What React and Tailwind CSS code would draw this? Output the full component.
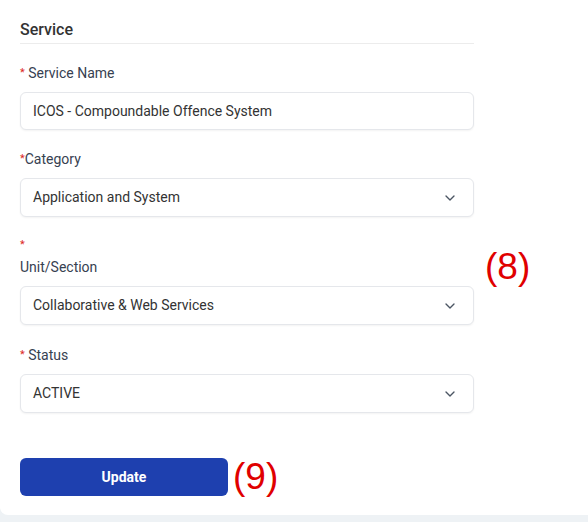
import React from 'react';
import { ChevronDown } from 'lucide-react';

function Label({ children, split }) {
  return (
    <label className="block text-[14px] leading-[22px] text-[#374151] mb-2">
      {split ? (
        <>
          <span className="block text-[#dc2626] text-[11px]">*</span>
          {children}
        </>
      ) : (
        children
      )}
    </label>
  );
}

function Req() {
  return <span className="text-[#dc2626] text-[11px] align-top">*</span>;
}

function SelectBox({ value }) {
  return (
    <div className="h-[39px] w-full bg-white border border-[#e5e7eb] rounded-md shadow-[0_1px_2px_rgba(0,0,0,0.05)] px-3 flex items-center justify-between text-[14px] text-[#333]">
      <span>{value}</span>
      <ChevronDown className="w-4 h-4 text-[#4b5563] mr-[3px]" strokeWidth={2} />
    </div>
  );
}

export default function App() {
  return (
    <div className="w-[588px] h-[522px] bg-[#eef2f5] overflow-hidden" style={{ fontFamily: 'Roboto, "Liberation Sans", sans-serif' }}>
      <div className="relative bg-white h-[515px] rounded-bl-lg px-5 pt-[19px]">
        <div className="w-[454px]">
          <h2 className="text-[16px] leading-[22px] font-medium text-[#333] pb-[2px] border-b border-[#ececec]">Service</h2>

          <div className="mt-[18px]">
            <Label><Req /> Service Name</Label>
            <div className="h-[38px] w-full bg-white border border-[#e5e7eb] rounded-md shadow-[0_1px_2px_rgba(0,0,0,0.05)] px-3 flex items-center text-[14px] text-[#333]">
              ICOS - Compoundable Offence System
            </div>
          </div>

          <div className="mt-[18px]">
            <Label><Req />Category</Label>
            <SelectBox value="Application and System" />
          </div>

          <div className="mt-[17px]">
            <Label split>Unit/Section</Label>
            <SelectBox value="Collaborative & Web Services" />
          </div>

          <div className="mt-[19px]">
            <Label><Req /> Status</Label>
            <SelectBox value="ACTIVE" />
          </div>

          <button className="mt-[45px] w-[208px] h-[38px] bg-[#1e40af] rounded-md text-white text-[14px] font-bold">
            Update
          </button>
        </div>

        <span className="absolute left-[485px] top-[243px] text-[37px] leading-[48px] text-[#e00000]" style={{ fontFamily: '"Liberation Sans", sans-serif' }}>(8)</span>
        <span className="absolute left-[233px] top-[453px] text-[37px] leading-[48px] text-[#e00000]" style={{ fontFamily: '"Liberation Sans", sans-serif' }}>(9)</span>
      </div>
    </div>
  );
}
